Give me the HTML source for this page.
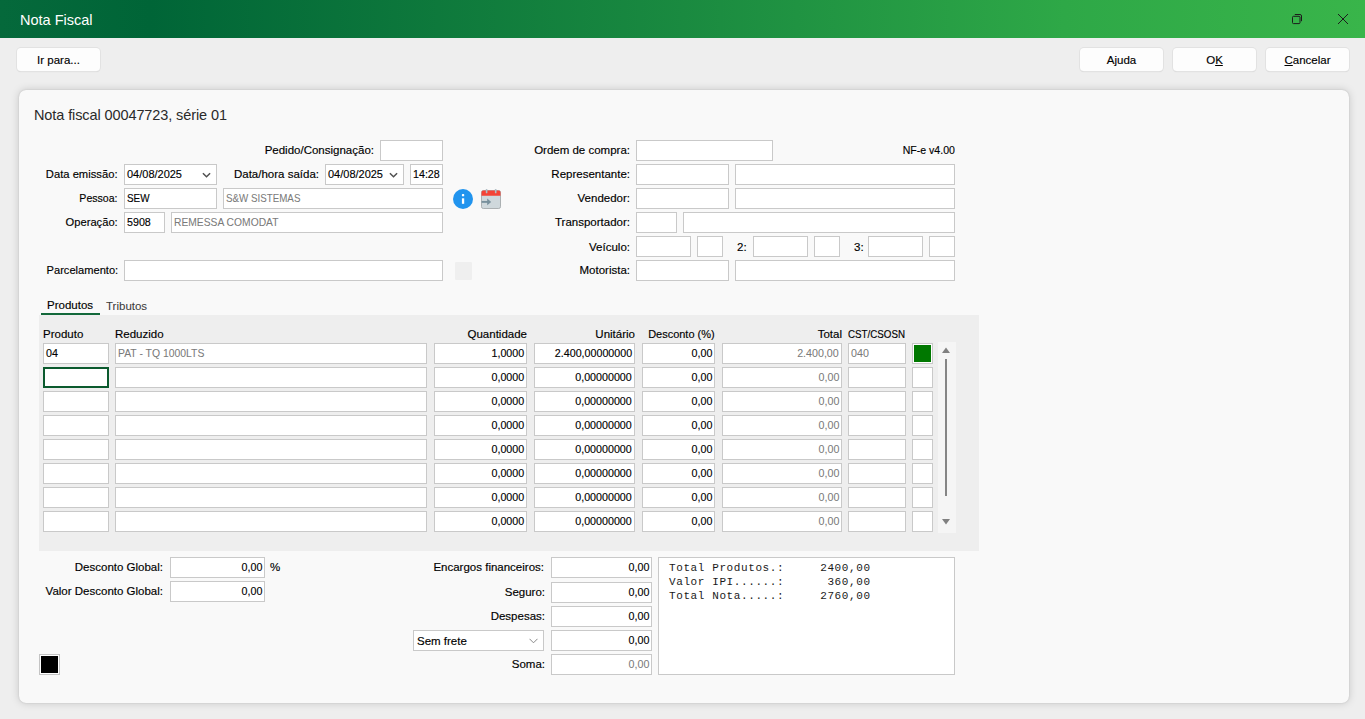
<!DOCTYPE html><html><head><meta charset="utf-8"><style>
*{margin:0;padding:0;box-sizing:border-box}
html,body{width:1365px;height:719px;overflow:hidden;background:#eeeeee;font-family:"Liberation Sans",sans-serif;color:#000}
.lb,.in,.hd,.btn{-webkit-text-stroke:0.15px currentColor}
.abs{position:absolute}
#tb{position:absolute;left:0;top:0;width:1365px;height:38px;background:linear-gradient(90deg,#05693b 0%,#006537 11%,#1a8a40 50%,#2ea847 78%,#39b54a 100%)}
#tbt{position:absolute;left:20px;top:1px;height:38px;line-height:38px;color:#fff;font-size:14.5px}
.btn{position:absolute;top:48px;height:23px;background:#fdfdfd;border-radius:4px;box-shadow:0 0 0 1px #e2e2e2,0 1px 1px #d0d0d0;font-size:11.5px;text-align:center;line-height:25px}
#panel{position:absolute;left:19px;top:90px;width:1330px;height:613px;background:#f9f9f9;border-radius:7px;box-shadow:0 0 1.5px rgba(0,0,0,0.18),0 0 9px rgba(0,0,0,0.17)}
.in{position:absolute;background:#fff;border:1px solid #c9c9c9;font-size:11.5px;line-height:19px;white-space:nowrap;overflow:hidden}
.tl{position:absolute;left:2px;top:0}
.tr{position:absolute;right:2px;top:0}
.lb{position:absolute;font-size:11.5px;white-space:nowrap}
.chev{position:absolute;right:5px;top:7px}
.hd{position:absolute;top:324px;font-size:11.5px;line-height:21px;white-space:nowrap}
</style></head><body><div id="tb"><div id="tbt">Nota Fiscal</div>
<svg class="abs" style="left:1290px;top:12px" width="14" height="14" viewBox="0 0 14 14"><rect x="2.5" y="4.3" width="7.5" height="7.3" rx="1" fill="none" stroke="#1c1c1c" stroke-width="1"/><path d="M4.8 2.5 H10 a1.5 1.5 0 0 1 1.5 1.5 V9.2" fill="none" stroke="#1c1c1c" stroke-width="1"/></svg>
<svg class="abs" style="left:1337px;top:13px" width="12" height="12" viewBox="0 0 12 12"><path d="M1 1 L11 11 M11 1 L1 11" stroke="#1c1c1c" stroke-width="1"/></svg>
</div>
<div class="btn" style="left:17px;width:83px">Ir para...</div>
<div class="btn" style="left:1080px;width:83px">Ajuda</div>
<div class="btn" style="left:1173px;width:83px">O<u>K</u></div>
<div class="btn" style="left:1266px;width:83px"><u>C</u>ancelar</div>
<div id="panel"></div>
<div class="lb" style="left:34px;top:105px;font-size:14.5px;line-height:20px;letter-spacing:-0.1px;color:#2a2a2a;-webkit-text-stroke:0">Nota fiscal 00047723, série 01</div>
<div class="lb" style="right:991px;top:140px;height:21px;line-height:21px;">Pedido/Consignação:</div>
<div class="in" style="left:380px;top:140px;width:63px;height:21px;"></div>
<div class="lb" style="right:1247px;top:164px;height:21px;line-height:21px;transform:scaleX(0.975);transform-origin:right center">Data emissão:</div>
<div class="in" style="left:124px;top:164px;width:93px;height:21px;"><span class="tl" style="transform:scaleX(0.955);transform-origin:left center;">04/08/2025</span><svg class="chev" style="right:5px;top:7px" width="9" height="6" viewBox="0 0 9 6"><path d="M0.9 1.3 L4.5 4.8 L8.1 1.3" fill="none" stroke="#505050" stroke-width="1.5"/></svg></div>
<div class="lb" style="right:1046px;top:164px;height:21px;line-height:21px;">Data/hora saída:</div>
<div class="in" style="left:325px;top:164px;width:79px;height:21px;"><span class="tl" style="transform:scaleX(0.955);transform-origin:left center;">04/08/2025</span><svg class="chev" style="right:5px;top:7px" width="9" height="6" viewBox="0 0 9 6"><path d="M0.9 1.3 L4.5 4.8 L8.1 1.3" fill="none" stroke="#505050" stroke-width="1.5"/></svg></div>
<div class="in" style="left:410px;top:164px;width:33px;height:21px;"><span class="tl" style="transform:scaleX(0.93);transform-origin:left center;">14:28</span></div>
<div class="lb" style="right:1247px;top:188px;height:21px;line-height:21px;transform:scaleX(0.92);transform-origin:right center">Pessoa:</div>
<div class="in" style="left:124px;top:188px;width:93px;height:21px;"><span class="tl" style="transform:scaleX(0.86);transform-origin:left center;">SEW</span></div>
<div class="in" style="left:223px;top:188px;width:220px;height:21px;"><span class="tl" style="color:#7a7a7a;-webkit-text-stroke:0.05px #7a7a7a;transform:scaleX(0.85);transform-origin:left center;">S&amp;W SISTEMAS</span></div>
<div class="lb" style="right:1247px;top:212px;height:21px;line-height:21px;transform:scaleX(0.97);transform-origin:right center">Operação:</div>
<div class="in" style="left:124px;top:212px;width:41px;height:21px;"><span class="tl" style="transform:scaleX(0.93);transform-origin:left center;">5908</span></div>
<div class="in" style="left:171px;top:212px;width:272px;height:21px;"><span class="tl" style="color:#7a7a7a;-webkit-text-stroke:0.05px #7a7a7a;transform:scaleX(0.895);transform-origin:left center;">REMESSA COMODAT</span></div>
<div class="lb" style="right:1247px;top:260px;height:21px;line-height:21px;transform:scaleX(0.965);transform-origin:right center">Parcelamento:</div>
<div class="in" style="left:124px;top:260px;width:319px;height:21px;"></div>
<svg class="abs" style="left:453px;top:189px" width="20" height="20" viewBox="0 0 20 20"><circle cx="10" cy="10" r="10" fill="#2194ee"/><rect x="8.9" y="9.3" width="2.3" height="5.5" fill="#fff"/><rect x="8.9" y="5.1" width="2.3" height="2.2" rx="0.6" fill="#fff"/></svg>
<svg class="abs" style="left:481px;top:189px" width="21" height="21" viewBox="0 0 21 21"><rect x="0.5" y="1.5" width="19" height="18" rx="1.8" fill="#cfd8dc" stroke="#a4a9ab" stroke-width="0.9"/><path d="M0.5 3.3 a1.8 1.8 0 0 1 1.8 -1.8 H17.7 a1.8 1.8 0 0 1 1.8 1.8 V6.8 H0.5 Z" fill="#f44336"/><rect x="4.8" y="0" width="1.6" height="4.2" rx="0.5" fill="#b0bec5"/><rect x="13.9" y="0" width="1.6" height="4.2" rx="0.5" fill="#b0bec5"/><path d="M0.6 12.9 H7" fill="none" stroke="#78909c" stroke-width="1.9"/><path d="M6.2 9.6 L10.2 12.9 L6.2 16.2 Z" fill="#78909c"/></svg>
<div class="abs" style="left:455px;top:262px;width:17px;height:18px;background:#efefef;border-radius:1px"></div>
<div class="lb" style="right:735px;top:140px;height:21px;line-height:21px;">Ordem de compra:</div>
<div class="in" style="left:636px;top:140px;width:137px;height:21px;"></div>
<div class="lb" style="right:410px;top:140px;height:21px;line-height:21px;transform:scaleX(0.917);transform-origin:right center">NF-e v4.00</div>
<div class="lb" style="right:735px;top:164px;height:21px;line-height:21px;">Representante:</div>
<div class="in" style="left:636px;top:164px;width:93px;height:21px;"></div>
<div class="in" style="left:735px;top:164px;width:220px;height:21px;"></div>
<div class="lb" style="right:735px;top:188px;height:21px;line-height:21px;">Vendedor:</div>
<div class="in" style="left:636px;top:188px;width:93px;height:21px;"></div>
<div class="in" style="left:735px;top:188px;width:220px;height:21px;"></div>
<div class="lb" style="right:735px;top:212px;height:21px;line-height:21px;">Transportador:</div>
<div class="in" style="left:636px;top:212px;width:41px;height:21px;"></div>
<div class="in" style="left:683px;top:212px;width:272px;height:21px;"></div>
<div class="lb" style="right:735px;top:237px;height:21px;line-height:21px;">Veículo:</div>
<div class="in" style="left:636px;top:236px;width:55px;height:21px;"></div>
<div class="in" style="left:697px;top:236px;width:26px;height:21px;"></div>
<div class="lb" style="left:737px;top:237px;height:21px;line-height:21px;">2:</div>
<div class="in" style="left:753px;top:236px;width:55px;height:21px;"></div>
<div class="in" style="left:814px;top:236px;width:26px;height:21px;"></div>
<div class="lb" style="left:854px;top:237px;height:21px;line-height:21px;">3:</div>
<div class="in" style="left:868px;top:236px;width:55px;height:21px;"></div>
<div class="in" style="left:929px;top:236px;width:26px;height:21px;"></div>
<div class="lb" style="right:735px;top:260px;height:21px;line-height:21px;">Motorista:</div>
<div class="in" style="left:636px;top:260px;width:93px;height:21px;"></div>
<div class="in" style="left:735px;top:260px;width:220px;height:21px;"></div>
<div class="lb" style="left:47px;top:296px;line-height:18px">Produtos</div>
<div class="lb" style="left:106px;top:297px;line-height:18px;color:#3a3a3a;-webkit-text-stroke:0.05px #3a3a3a">Tributos</div>
<div class="abs" style="left:41px;top:313px;width:59px;height:2px;background:#12683a"></div>
<div class="abs" style="left:39px;top:315px;width:940px;height:236px;background:#eeeeee"></div>
<div class="hd" style="left:43px">Produto</div>
<div class="hd" style="left:115px">Reduzido</div>
<div class="hd" style="right:838px">Quantidade</div>
<div class="hd" style="right:730px">Unitário</div>
<div class="hd" style="right:650px;transform:scaleX(0.955);transform-origin:right center">Desconto (%)</div>
<div class="hd" style="right:523px">Total</div>
<div class="hd" style="left:848px;transform:scaleX(0.85);transform-origin:left center">CST/CSOSN</div>
<div class="in" style="left:43px;top:343px;width:66px;height:21px;"><span class="tl" style="transform:scaleX(0.93);transform-origin:left center;">04</span></div>
<div class="in" style="left:115px;top:343px;width:312px;height:21px;"><span class="tl" style="color:#7a7a7a;-webkit-text-stroke:0.05px #7a7a7a;transform:scaleX(0.905);transform-origin:left center;">PAT - TQ 1000LTS</span></div>
<div class="in" style="left:434px;top:343px;width:93px;height:21px;"><span class="tr" style="transform:scaleX(0.93);transform-origin:right center;">1,0000</span></div>
<div class="in" style="left:534px;top:343px;width:101px;height:21px;"><span class="tr" style="transform:scaleX(0.93);transform-origin:right center;">2.400,00000000</span></div>
<div class="in" style="left:642px;top:343px;width:73px;height:21px;"><span class="tr" style="transform:scaleX(0.93);transform-origin:right center;">0,00</span></div>
<div class="in" style="left:722px;top:343px;width:120px;height:21px;"><span class="tr" style="color:#7a7a7a;-webkit-text-stroke:0.05px #7a7a7a;transform:scaleX(0.93);transform-origin:right center;">2.400,00</span></div>
<div class="in" style="left:848px;top:343px;width:58px;height:21px;"><span class="tl" style="color:#7a7a7a;-webkit-text-stroke:0.05px #7a7a7a;transform:scaleX(0.93);transform-origin:left center;">040</span></div>
<div class="in" style="left:912px;top:343px;width:21px;height:21px;padding:1px"><div style="width:100%;height:100%;background:#007800"></div></div>
<div class="in" style="left:43px;top:367px;width:66px;height:21px;border:2px solid #0b5a2e"></div>
<div class="in" style="left:115px;top:367px;width:312px;height:21px;"></div>
<div class="in" style="left:434px;top:367px;width:93px;height:21px;"><span class="tr" style="transform:scaleX(0.93);transform-origin:right center;">0,0000</span></div>
<div class="in" style="left:534px;top:367px;width:101px;height:21px;"><span class="tr" style="transform:scaleX(0.93);transform-origin:right center;">0,00000000</span></div>
<div class="in" style="left:642px;top:367px;width:73px;height:21px;"><span class="tr" style="transform:scaleX(0.93);transform-origin:right center;">0,00</span></div>
<div class="in" style="left:722px;top:367px;width:120px;height:21px;"><span class="tr" style="color:#7a7a7a;-webkit-text-stroke:0.05px #7a7a7a;transform:scaleX(0.93);transform-origin:right center;">0,00</span></div>
<div class="in" style="left:848px;top:367px;width:58px;height:21px;"></div>
<div class="in" style="left:912px;top:367px;width:21px;height:21px;"></div>
<div class="in" style="left:43px;top:391px;width:66px;height:21px;"></div>
<div class="in" style="left:115px;top:391px;width:312px;height:21px;"></div>
<div class="in" style="left:434px;top:391px;width:93px;height:21px;"><span class="tr" style="transform:scaleX(0.93);transform-origin:right center;">0,0000</span></div>
<div class="in" style="left:534px;top:391px;width:101px;height:21px;"><span class="tr" style="transform:scaleX(0.93);transform-origin:right center;">0,00000000</span></div>
<div class="in" style="left:642px;top:391px;width:73px;height:21px;"><span class="tr" style="transform:scaleX(0.93);transform-origin:right center;">0,00</span></div>
<div class="in" style="left:722px;top:391px;width:120px;height:21px;"><span class="tr" style="color:#7a7a7a;-webkit-text-stroke:0.05px #7a7a7a;transform:scaleX(0.93);transform-origin:right center;">0,00</span></div>
<div class="in" style="left:848px;top:391px;width:58px;height:21px;"></div>
<div class="in" style="left:912px;top:391px;width:21px;height:21px;"></div>
<div class="in" style="left:43px;top:415px;width:66px;height:21px;"></div>
<div class="in" style="left:115px;top:415px;width:312px;height:21px;"></div>
<div class="in" style="left:434px;top:415px;width:93px;height:21px;"><span class="tr" style="transform:scaleX(0.93);transform-origin:right center;">0,0000</span></div>
<div class="in" style="left:534px;top:415px;width:101px;height:21px;"><span class="tr" style="transform:scaleX(0.93);transform-origin:right center;">0,00000000</span></div>
<div class="in" style="left:642px;top:415px;width:73px;height:21px;"><span class="tr" style="transform:scaleX(0.93);transform-origin:right center;">0,00</span></div>
<div class="in" style="left:722px;top:415px;width:120px;height:21px;"><span class="tr" style="color:#7a7a7a;-webkit-text-stroke:0.05px #7a7a7a;transform:scaleX(0.93);transform-origin:right center;">0,00</span></div>
<div class="in" style="left:848px;top:415px;width:58px;height:21px;"></div>
<div class="in" style="left:912px;top:415px;width:21px;height:21px;"></div>
<div class="in" style="left:43px;top:439px;width:66px;height:21px;"></div>
<div class="in" style="left:115px;top:439px;width:312px;height:21px;"></div>
<div class="in" style="left:434px;top:439px;width:93px;height:21px;"><span class="tr" style="transform:scaleX(0.93);transform-origin:right center;">0,0000</span></div>
<div class="in" style="left:534px;top:439px;width:101px;height:21px;"><span class="tr" style="transform:scaleX(0.93);transform-origin:right center;">0,00000000</span></div>
<div class="in" style="left:642px;top:439px;width:73px;height:21px;"><span class="tr" style="transform:scaleX(0.93);transform-origin:right center;">0,00</span></div>
<div class="in" style="left:722px;top:439px;width:120px;height:21px;"><span class="tr" style="color:#7a7a7a;-webkit-text-stroke:0.05px #7a7a7a;transform:scaleX(0.93);transform-origin:right center;">0,00</span></div>
<div class="in" style="left:848px;top:439px;width:58px;height:21px;"></div>
<div class="in" style="left:912px;top:439px;width:21px;height:21px;"></div>
<div class="in" style="left:43px;top:463px;width:66px;height:21px;"></div>
<div class="in" style="left:115px;top:463px;width:312px;height:21px;"></div>
<div class="in" style="left:434px;top:463px;width:93px;height:21px;"><span class="tr" style="transform:scaleX(0.93);transform-origin:right center;">0,0000</span></div>
<div class="in" style="left:534px;top:463px;width:101px;height:21px;"><span class="tr" style="transform:scaleX(0.93);transform-origin:right center;">0,00000000</span></div>
<div class="in" style="left:642px;top:463px;width:73px;height:21px;"><span class="tr" style="transform:scaleX(0.93);transform-origin:right center;">0,00</span></div>
<div class="in" style="left:722px;top:463px;width:120px;height:21px;"><span class="tr" style="color:#7a7a7a;-webkit-text-stroke:0.05px #7a7a7a;transform:scaleX(0.93);transform-origin:right center;">0,00</span></div>
<div class="in" style="left:848px;top:463px;width:58px;height:21px;"></div>
<div class="in" style="left:912px;top:463px;width:21px;height:21px;"></div>
<div class="in" style="left:43px;top:487px;width:66px;height:21px;"></div>
<div class="in" style="left:115px;top:487px;width:312px;height:21px;"></div>
<div class="in" style="left:434px;top:487px;width:93px;height:21px;"><span class="tr" style="transform:scaleX(0.93);transform-origin:right center;">0,0000</span></div>
<div class="in" style="left:534px;top:487px;width:101px;height:21px;"><span class="tr" style="transform:scaleX(0.93);transform-origin:right center;">0,00000000</span></div>
<div class="in" style="left:642px;top:487px;width:73px;height:21px;"><span class="tr" style="transform:scaleX(0.93);transform-origin:right center;">0,00</span></div>
<div class="in" style="left:722px;top:487px;width:120px;height:21px;"><span class="tr" style="color:#7a7a7a;-webkit-text-stroke:0.05px #7a7a7a;transform:scaleX(0.93);transform-origin:right center;">0,00</span></div>
<div class="in" style="left:848px;top:487px;width:58px;height:21px;"></div>
<div class="in" style="left:912px;top:487px;width:21px;height:21px;"></div>
<div class="in" style="left:43px;top:511px;width:66px;height:21px;"></div>
<div class="in" style="left:115px;top:511px;width:312px;height:21px;"></div>
<div class="in" style="left:434px;top:511px;width:93px;height:21px;"><span class="tr" style="transform:scaleX(0.93);transform-origin:right center;">0,0000</span></div>
<div class="in" style="left:534px;top:511px;width:101px;height:21px;"><span class="tr" style="transform:scaleX(0.93);transform-origin:right center;">0,00000000</span></div>
<div class="in" style="left:642px;top:511px;width:73px;height:21px;"><span class="tr" style="transform:scaleX(0.93);transform-origin:right center;">0,00</span></div>
<div class="in" style="left:722px;top:511px;width:120px;height:21px;"><span class="tr" style="color:#7a7a7a;-webkit-text-stroke:0.05px #7a7a7a;transform:scaleX(0.93);transform-origin:right center;">0,00</span></div>
<div class="in" style="left:848px;top:511px;width:58px;height:21px;"></div>
<div class="in" style="left:912px;top:511px;width:21px;height:21px;"></div>
<div class="abs" style="left:938px;top:342px;width:18px;height:191px;background:#f5f5f5"></div>
<svg class="abs" style="left:941px;top:346px" width="10" height="8" viewBox="0 0 10 8"><path d="M1 7 L5 1.5 L9 7 Z" fill="#808080"/></svg>
<svg class="abs" style="left:941px;top:518px" width="10" height="8" viewBox="0 0 10 8"><path d="M1 1 L5 6.5 L9 1 Z" fill="#808080"/></svg>
<div class="abs" style="left:945px;top:359px;width:2px;height:137px;background:#858585"></div>
<div class="lb" style="right:1202px;top:557px;height:21px;line-height:21px;">Desconto Global:</div>
<div class="in" style="left:170px;top:557px;width:95px;height:21px;"><span class="tr" style="transform:scaleX(0.93);transform-origin:right center;">0,00</span></div>
<div class="lb" style="left:270px;top:557px;height:21px;line-height:21px;">%</div>
<div class="lb" style="right:1202px;top:581px;height:21px;line-height:21px;">Valor Desconto Global:</div>
<div class="in" style="left:170px;top:581px;width:95px;height:21px;"><span class="tr" style="transform:scaleX(0.93);transform-origin:right center;">0,00</span></div>
<div class="abs" style="left:39px;top:654px;width:21px;height:21px;border:1px solid #c4c4c4;background:#fff;padding:1px"><div style="width:100%;height:100%;background:#000"></div></div>
<div class="lb" style="right:821px;top:557px;height:21px;line-height:21px;">Encargos financeiros:</div>
<div class="in" style="left:551px;top:557px;width:101px;height:21px;"><span class="tr" style="transform:scaleX(0.93);transform-origin:right center;">0,00</span></div>
<div class="lb" style="right:820px;top:582px;height:21px;line-height:21px;">Seguro:</div>
<div class="in" style="left:551px;top:582px;width:101px;height:21px;"><span class="tr" style="transform:scaleX(0.93);transform-origin:right center;">0,00</span></div>
<div class="lb" style="right:820px;top:606px;height:21px;line-height:21px;">Despesas:</div>
<div class="in" style="left:551px;top:606px;width:101px;height:21px;"><span class="tr" style="transform:scaleX(0.93);transform-origin:right center;">0,00</span></div>
<div class="in" style="left:413px;top:630px;width:131px;height:21px;"><span class="tl" style="left:3px;top:1px">Sem frete</span><svg class="chev" style="right:5px;top:7px" width="9" height="6" viewBox="0 0 9 6"><path d="M0.5 0.8 L4.5 4.8 L8.5 0.8" fill="none" stroke="#888" stroke-width="1"/></svg></div>
<div class="in" style="left:551px;top:630px;width:101px;height:21px;"><span class="tr" style="transform:scaleX(0.93);transform-origin:right center;">0,00</span></div>
<div class="lb" style="right:820px;top:654px;height:21px;line-height:21px;">Soma:</div>
<div class="in" style="left:551px;top:654px;width:101px;height:21px;"><span class="tr" style="color:#7a7a7a;-webkit-text-stroke:0.05px #7a7a7a;transform:scaleX(0.93);transform-origin:right center;">0,00</span></div>
<div class="in" style="left:658px;top:557px;width:297px;height:118px;font-family:'Liberation Mono',monospace;font-size:11px;letter-spacing:0.6px;line-height:14px;padding:3px 0 0 10px;white-space:pre;-webkit-text-stroke:0;color:#1a1a1a">Total Produtos.:     2400,00
Valor IPI......:      360,00
Total Nota.....:     2760,00</div></body></html>
